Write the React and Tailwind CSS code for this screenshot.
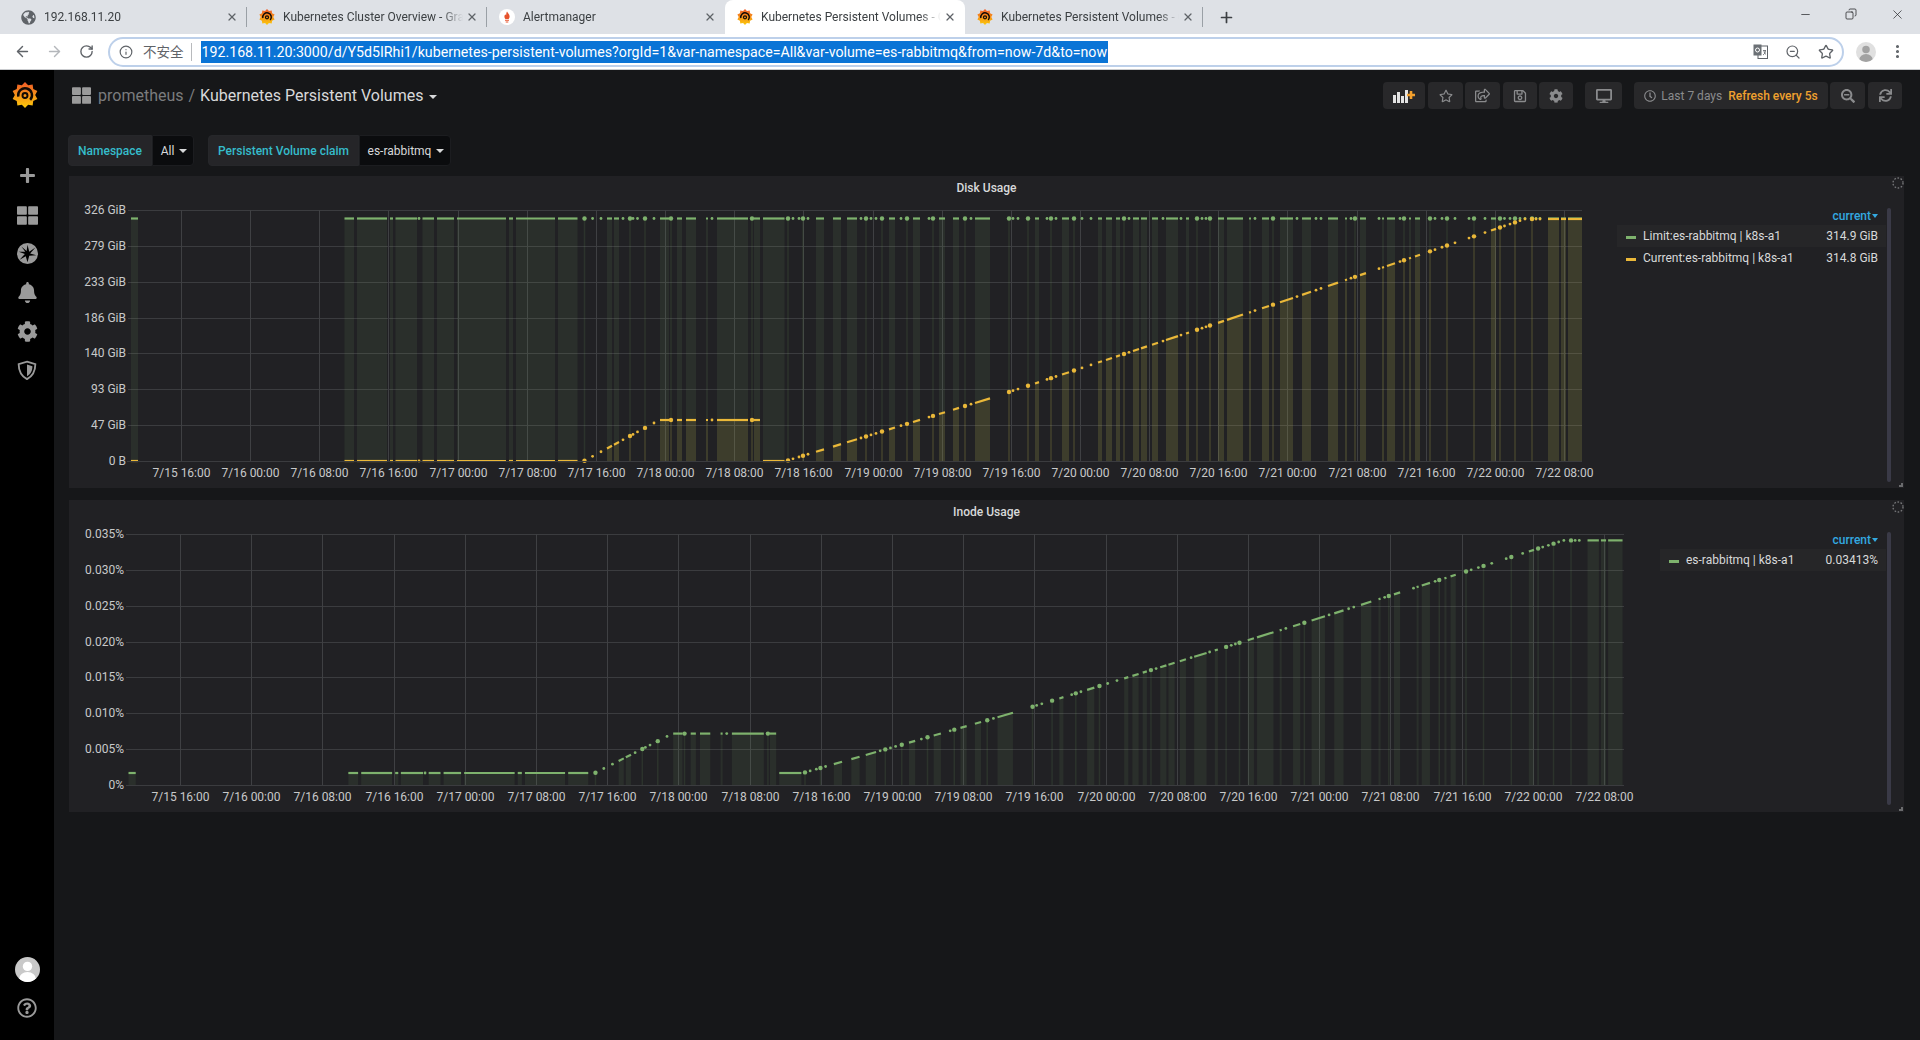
import { ArrowLeft, ArrowRight, RotateCw, Info, ZoomOut, Star, MoreVertical, X, Plus, Minus, Copy } from 'lucide-react';
import {
  FaGlobeAmericas, FaPlus, FaThLarge, FaBell, FaCog, FaRegQuestionCircle, FaRegStar,
  FaRegShareSquare, FaRegSave, FaDesktop, FaRegClock, FaSearchMinus, FaSync,
} from 'react-icons/fa';

const URL_TEXT = '192.168.11.20:3000/d/Y5d5IRhi1/kubernetes-persistent-volumes?orgId=1&var-namespace=All&var-volume=es-rabbitmq&from=now-7d&to=now';

const TICKS = [
  '7/15 16:00', '7/16 00:00', '7/16 08:00', '7/16 16:00', '7/17 00:00', '7/17 08:00', '7/17 16:00',
  '7/18 00:00', '7/18 08:00', '7/18 16:00', '7/19 00:00', '7/19 08:00', '7/19 16:00', '7/20 00:00',
  '7/20 08:00', '7/20 16:00', '7/21 00:00', '7/21 08:00', '7/21 16:00', '7/22 00:00', '7/22 08:00',
];

// scrape gaps read off the first panel: [from, to] is a run of samples, a bare number a lone sample
const RUNS = [
  [131, 138], [344.5, 354], [357, 387], [390, 393], [395.5, 417], 419, [422.5, 434], [437, 454], [457, 506],
  [509, 513], [516, 555], [558, 577.5], 584.5, 592.6, 601, [607, 612], [614, 619], 623, 630, 633, 637.5, 645, 654,
  [660, 669], 671, [677, 682], [686, 696], [706, 708], 712, [717, 748], 752, [754, 760], [763, 784.5], 788, 793, 799,
  803, 808, [816, 824], [833, 841], [847, 857], 861, 866, 871, 876, 882, [889, 895], 901, 907, [913, 920], 929, 933,
  [939, 945], [953, 959], 965, 971, [975, 990], 1009, 1013, 1018, 1028, [1035, 1039], 1047, 1051, 1056, [1062, 1069],
  1074, 1082, 1091, [1098, 1102], [1106, 1112], [1116, 1120], 1124, 1129, [1133, 1139], [1141, 1147], [1152, 1158],
  1163, [1166, 1178], 1181, [1186, 1189], 1197, 1202, 1206, 1210, [1218, 1224], [1227, 1243], [1249, 1251], 1255,
  [1262, 1269], 1273, [1280, 1293], 1297, [1302, 1311], 1316, 1321, [1328, 1338], [1345, 1347], 1351, 1355, [1360, 1366],
  1379, [1382, 1384], [1387, 1395], 1400, 1404, [1409, 1411], [1415, 1420], 1430, 1435, 1442, 1447, 1455, 1469, 1474,
  1485, [1491, 1496], 1500, 1504.5, 1510, 1515, 1520, 1525, 1532, 1536, 1540, [1548, 1559], [1561, 1566], [1568, 1582],
];

const CURVE = [
  [131, 461], [584, 461], [654, 423], [660, 420], [760, 420], [761, 461], [786, 461],
  [988, 399], [1287, 300], [1525, 219], [1582, 219],
];

function curveY(x) {
  for (let i = 1; i < CURVE.length; i++) {
    const [x0, y0] = CURVE[i - 1];
    const [x1, y1] = CURVE[i];
    if (x <= x1) return y0 + ((x - x0) / (x1 - x0)) * (y1 - y0);
  }
  return 219;
}

function Chart({ left, width, top, plotTop, plotBottom, plotLeft, plotRight, gridX, stepX, yTicks, labelRight, series, toX }) {
  const rowGap = (plotBottom - plotTop) / (yTicks.length - 1);
  return (
    <svg width={width} height={288} viewBox={`${left} ${top} ${width} 288`} className="shrink-0 text-[12px]">
      {yTicks.map((label, i) => {
        const y = Math.round(plotTop + i * rowGap) + 0.5;
        return (
          <g key={label}>
            <line x1={labelRight + 2} x2={plotRight} y1={y} y2={y} stroke="#3b3c3f" />
            <text x={labelRight} y={y + 3} textAnchor="end" className="fill-[#c8c9ca]">{label}</text>
          </g>
        );
      })}
      {TICKS.map((label, i) => {
        const x = Math.round(gridX + i * stepX) + 0.5;
        return (
          <g key={label}>
            <line x1={x} x2={x} y1={plotTop} y2={plotBottom} stroke="#3f4043" />
            <text x={x} y={plotBottom + 16} textAnchor="middle" className="fill-[#c8c9ca]">{label}</text>
          </g>
        );
      })}
      {series.map((s) => (
        <g key={s.color}>
          {RUNS.map((run, i) => {
            const lone = typeof run === 'number';
            const a = toX(lone ? run : run[0]);
            const b = toX(lone ? run : run[1]);
            const ya = s.y(lone ? run : run[0]);
            const yb = s.y(lone ? run : run[1]);
            if (lone) {
              return (
                <g key={i}>
                  {i % 3 === 0 && <rect x={a - 0.75} y={ya} width={1.5} height={plotBottom - ya} fill={s.color} fillOpacity={0.12} />}
                  <circle cx={a} cy={ya} r={i % 3 === 0 ? 2.2 : 1.4} fill={s.color} />
                </g>
              );
            }
            return (
              <g key={i}>
                <path d={`M${a} ${plotBottom}L${a} ${ya}L${b} ${yb}L${b} ${plotBottom}Z`} fill={s.color} fillOpacity={0.1} />
                <line x1={a} x2={b} y1={ya} y2={yb} stroke={s.color} strokeWidth={2.2} />
              </g>
            );
          })}
        </g>
      ))}
      <line x1={plotLeft} x2={plotRight} y1={plotBottom + 0.5} y2={plotBottom + 0.5} stroke="#3b3c3f" />
    </svg>
  );
}

function Spinner() {
  return (
    <svg width="12" height="12" viewBox="0 0 12 12" className="absolute top-[1px] right-[0px]">
      <circle cx="6" cy="6" r="5" fill="none" stroke="#77787a" strokeWidth="1.3" strokeDasharray="1.6 1.6" />
    </svg>
  );
}

function Panel({ title, chart, rows, legendWidth, barHeight }) {
  return (
    <div className="relative h-[312px] bg-[#212124]">
      <div className="h-[24px] pt-[4px] text-center text-[12px] leading-4 font-medium text-[#d8d9da]">{title}</div>
      <Spinner />
      <div className="flex">
        {chart}
        <div className={legendWidth}>
          <div className="flex h-[25px] items-center justify-end gap-px pt-[7px] pr-[8px] text-[12px] font-medium text-[#33a9e0]">
            current
            <span className="border-x-[3px] border-t-[4px] border-x-transparent border-t-[#33a9e0]" />
          </div>
          {rows.map((row, i) => (
            <div key={row.name} className={`flex h-[22px] items-center pr-[8px] pl-[9px] text-[12px] text-[#d8d9da] ${i === 0 ? 'bg-[#262628]' : ''}`}>
              <span className="mt-[2px] mr-[7px] h-[3px] w-[10px]" style={{ backgroundColor: row.color }} />
              <span className="flex-1">{row.name}</span>
              <span>{row.value}</span>
            </div>
          ))}
        </div>
        <div className={`mt-[8px] ml-px w-[4px] rounded-sm bg-[#3a3a47] ${barHeight}`} />
      </div>
      <div className="absolute right-[1px] bottom-[1px] h-[4px] w-[4px] border-r-2 border-b-2 border-[#6a6b6d]" />
    </div>
  );
}

function GrafanaLogo({ id, size }) {
  const spikes = [];
  for (let i = 0; i < 20; i++) {
    const r = i % 2 === 0 ? 12 : 9.4;
    const a = (i / 20) * Math.PI * 2 - Math.PI / 2;
    spikes.push(`${(12 + r * Math.cos(a)).toFixed(2)},${(12 + r * Math.sin(a)).toFixed(2)}`);
  }
  return (
    <svg width={size} height={size} viewBox="0 0 24 24" className="shrink-0">
      <defs>
        <linearGradient id={id} x1="0" y1="0" x2="0" y2="1">
          <stop offset="0" stopColor="#f05a28" />
          <stop offset="1" stopColor="#fbca0a" />
        </linearGradient>
      </defs>
      <polygon points={spikes.join(' ')} fill={`url(#${id})`} />
      <path d="M5.800 13.500A6.400 6.400 0 1 1 16.800 16.500" fill="none" stroke="#120a05" strokeWidth="2.200" />
      <circle cx="12" cy="12.500" r="2.300" fill="none" stroke="#120a05" strokeWidth="1.800" />
    </svg>
  );
}

function FlameIcon() {
  return (
    <svg width="16" height="16" viewBox="0 0 16 16" className="shrink-0">
      <circle cx="8" cy="8" r="8" fill="#fff" />
      <path d="M8 2.500c.6 1.600 2.600 2.600 2.600 5 0 1.200-.5 2-1 2.500H6.400c-.5-.5-1-1.300-1-2.500 0-1 .6-1.600 1-2.200.2.600.5.900.8 1C7.100 4.600 7.500 3.500 8 2.500zM6 10.800h4v1H6zM6.700 12.500h2.600v1H6.700z" fill="#e6522c" />
    </svg>
  );
}

function Tab({ icon, title, active, sep, width }) {
  return (
    <div className={`flex h-[34px] shrink-0 items-center pl-[12px] ${width} ${active ? 'rounded-t-lg bg-white' : ''}`}>
      {icon}
      <div className="ml-[8px] flex-1 overflow-hidden text-[12px] whitespace-nowrap text-[#3c4043] [mask-image:linear-gradient(to_right,black_88%,transparent)]">{title}</div>
      <X size={12} strokeWidth={2.5} className="ml-[3px] shrink-0 text-[#5f6368]" />
      <span className={`ml-[8px] h-[20px] w-px shrink-0 ${sep ? 'bg-[#9aa0a6]' : ''}`} />
    </div>
  );
}

function TabStrip() {
  return (
    <div className="flex h-[34px] items-start bg-[#dee1e6] pl-[8px]">
      <Tab width="w-[239px]" sep title="192.168.11.20" icon={<FaGlobeAmericas size={15} className="ml-[1px] shrink-0 text-[#5f6368]" />} />
      <Tab width="w-[240px]" sep title="Kubernetes Cluster Overview - Grafana" icon={<GrafanaLogo id="fav-a" size={16} />} />
      <Tab width="w-[238px]" title="Alertmanager" icon={<FlameIcon />} />
      <Tab width="w-[240px]" active title="Kubernetes Persistent Volumes - Grafana" icon={<GrafanaLogo id="fav-b" size={16} />} />
      <Tab width="w-[238px]" sep title="Kubernetes Persistent Volumes - Grafana" icon={<GrafanaLogo id="fav-c" size={16} />} />
      <div className="flex h-[34px] w-[46px] items-center justify-center">
        <Plus size={17} strokeWidth={2.4} className="text-[#3c4043]" />
      </div>
      <div className="ml-auto flex">
        <div className="flex h-[28px] w-[46px] items-center justify-center"><Minus size={13} strokeWidth={1.3} className="text-[#202124]" /></div>
        <div className="flex h-[28px] w-[46px] items-center justify-center"><Copy size={12} strokeWidth={1.5} className="-scale-x-100 text-[#202124]" /></div>
        <div className="flex h-[28px] w-[46px] items-center justify-center"><X size={15} strokeWidth={1.1} className="text-[#202124]" /></div>
      </div>
    </div>
  );
}

function TranslateIcon() {
  return (
    <svg width="15" height="15" viewBox="0 0 15 15" className="shrink-0">
      <rect x="5" y="2" width="9.500" height="12.500" fill="#fff" stroke="#5f6368" strokeWidth="1" />
      <rect x="0.500" y="0.500" width="8" height="11" fill="#6b7075" />
      <circle cx="4.500" cy="6" r="2" fill="none" stroke="#fff" strokeWidth="1" />
      <path d="M10 6.500h3M11 6.500c0 2 1 3.500 2 4M12.500 6.500c0 2-1 3.500-2.500 4.500" fill="none" stroke="#5f6368" strokeWidth="0.800" />
    </svg>
  );
}

function Avatar({ size, back, front }) {
  return (
    <svg width={size} height={size} viewBox="0 0 24 24" className="shrink-0">
      <defs>
        <clipPath id={`clip-${size}`}><circle cx="12" cy="12" r="12" /></clipPath>
      </defs>
      <circle cx="12" cy="12" r="12" fill={back} />
      <g clipPath={`url(#clip-${size})`} fill={front}>
        <circle cx="12" cy="9" r="4.500" />
        <ellipse cx="12" cy="21" rx="8" ry="6.500" />
      </g>
    </svg>
  );
}

function Toolbar() {
  return (
    <div className="flex h-[36px] items-center border-b border-[#c9cbce] bg-white pl-[6px]">
      <div className="flex w-[32px] justify-center"><ArrowLeft size={17} strokeWidth={2} className="text-[#5f6368]" /></div>
      <div className="flex w-[32px] justify-center"><ArrowRight size={17} strokeWidth={2} className="text-[#b4b7bb]" /></div>
      <div className="flex w-[32px] justify-center"><RotateCw size={15} strokeWidth={2.2} className="text-[#5f6368]" /></div>
      <div className="ml-[6px] flex h-[30px] w-[1736px] items-center rounded-full border-2 border-[#bdd0ea] pl-[9px]">
        <Info size={14} strokeWidth={2} className="shrink-0 text-[#5f6368]" />
        <span className="ml-[10px] text-[13.500px] text-[#5f6368] font-[family-name:'Noto_Sans_CJK_SC',sans-serif]">不安全</span>
        <span className="ml-[7px] h-[18px] w-px bg-[#b8babd]" />
        <span className="ml-[9px] bg-[#0a74d6] px-px text-[14.200px] leading-[22px] text-white">{URL_TEXT}</span>
        <div className="ml-auto flex items-center gap-[17px] pr-[8px]">
          <TranslateIcon />
          <ZoomOut size={16} strokeWidth={1.8} className="text-[#5f6368]" />
          <Star size={16} strokeWidth={2} className="text-[#5f6368]" />
        </div>
      </div>
      <div className="ml-[12px]"><Avatar size={20} back="#e0e0e0" front="#a2a2a2" /></div>
      <MoreVertical size={17} strokeWidth={2.4} className="ml-[13px] text-[#5f6368]" />
    </div>
  );
}

function Sidebar() {
  return (
    <div className="flex w-[54px] shrink-0 flex-col items-center bg-black text-[#9a9a9a]">
      <div className="mt-[12px] -ml-[4px] h-[26px]"><GrafanaLogo id="logo" size={26} /></div>
      <div className="mt-[57px] flex h-[20px] items-center"><FaPlus size={17} /></div>
      <div className="mt-[20px]"><FaThLarge size={21} /></div>
      <svg width="21" height="21" viewBox="0 0 24 24" className="mt-[17px]">
        <circle cx="12" cy="12" r="12" fill="#9a9a9a" />
        <polygon points="12,2 14,10 21,5 15,12 22,14 14,14.500 12,22 10,15 3,19 9,12.500 2,10 9.500,10 5,4 11,9" fill="#000" />
      </svg>
      <div className="mt-[18px]"><FaBell size={21} /></div>
      <div className="mt-[18px]"><FaCog size={21} /></div>
      <svg width="20" height="20" viewBox="0 0 24 24" className="mt-[18px]">
        <path d="M12 2L22 5C22 13 19 19 12 23C5 19 2 13 2 5Z" fill="none" stroke="#9a9a9a" strokeWidth="2.200" />
        <path d="M12 5.500L18.500 7.500C18.500 12 17 16.500 12 19.500Z" fill="#9a9a9a" />
      </svg>
      <div className="mt-auto"><Avatar size={25} back="#c9c9c9" front="#ffffff" /></div>
      <div className="mt-[16px] mb-[22px]"><FaRegQuestionCircle size={20} /></div>
    </div>
  );
}

function NavButton({ className, children }) {
  return <div className={`flex h-[27px] items-center justify-center rounded-sm bg-[#28282a] text-[#8a8b8d] ${className}`}>{children}</div>;
}

function Navbar() {
  return (
    <div className="flex items-center pt-[12px] pr-[18px] pl-[18px]">
      <FaThLarge size={19} className="text-[#9a9a9a]" />
      <span className="ml-[7px] text-[16px] text-[#7b7c7e]">prometheus</span>
      <span className="mx-[5px] text-[16px] text-[#7b7c7e]">/</span>
      <span className="text-[16px] text-[#d8d9da]">Kubernetes Persistent Volumes</span>
      <span className="mt-[3px] ml-[6px] border-x-[4px] border-t-[4px] border-x-transparent border-t-[#d8d9da]" />
      <div className="ml-auto flex items-center">
        <NavButton className="w-[42px]">
          <svg width="22" height="14" viewBox="0 0 22 14">
            <rect x="0" y="6" width="3" height="8" fill="#e3e3e3" />
            <rect x="4" y="3" width="3" height="11" fill="#e3e3e3" />
            <rect x="8" y="7" width="3" height="7" fill="#e3e3e3" />
            <rect x="12" y="1" width="3" height="13" fill="#e3e3e3" />
            <path d="M14 6h8M18 2v8" stroke="#f3a02d" strokeWidth="2.600" />
          </svg>
        </NavButton>
        <NavButton className="ml-[3px] w-[35px]"><FaRegStar size={14} /></NavButton>
        <NavButton className="ml-[2px] w-[35px]"><FaRegShareSquare size={15} /></NavButton>
        <NavButton className="ml-[3px] w-[34px]"><FaRegSave size={14} /></NavButton>
        <NavButton className="ml-[2px] w-[34px]"><FaCog size={14} /></NavButton>
        <NavButton className="ml-[12px] w-[37px]"><FaDesktop size={16} /></NavButton>
        <NavButton className="ml-[12px] w-[194px] gap-[5px] text-[12px]">
          <FaRegClock size={12} />
          <span>Last 7 days</span>
          <span className="ml-[1px] font-medium text-[#f0a12f]">Refresh every 5s</span>
        </NavButton>
        <NavButton className="ml-[2px] w-[35px]"><FaSearchMinus size={14} /></NavButton>
        <NavButton className="ml-[3px] w-[34px]"><FaSync size={13} /></NavButton>
      </div>
    </div>
  );
}

function Variable({ label, value, labelWidth, valueWidth }) {
  return (
    <div className="flex h-[31px] text-[12px]">
      <div className={`flex items-center justify-center rounded-l-sm border border-[#26272a] bg-[#252528] font-medium text-[#35bccb] ${labelWidth}`}>{label}</div>
      <div className={`flex items-center justify-center gap-[5px] rounded-r-sm border border-[#1c1d20] bg-[#0b0c0e] pl-[2px] text-[#d8d9da] ${valueWidth}`}>
        {value}
        <span className="border-x-[4px] border-t-[4px] border-x-transparent border-t-[#d8d9da]" />
      </div>
    </div>
  );
}

const diskY = (x) => curveY(x);
const limitY = () => 218.5;
const inodeY = (x) => 773 - ((461 - curveY(x)) / 242.4) * 233;
const inodeX = (x) => 180 + 71.2 * ((x - 181) / 69.15);

export default function App() {
  return (
    <div className="flex h-[1040px] w-[1920px] flex-col overflow-hidden bg-[#161719] font-[family-name:Roboto,sans-serif]">
      <TabStrip />
      <Toolbar />
      <div className="flex flex-1">
        <Sidebar />
        <div className="flex-1">
          <Navbar />
          <div className="mt-[26px] ml-[14px] flex gap-[14px]">
            <Variable label="Namespace" value="All" labelWidth="w-[84px]" valueWidth="w-[42px]" />
            <Variable label="Persistent Volume claim" value="es-rabbitmq" labelWidth="w-[151px]" valueWidth="w-[92px]" />
          </div>
          <div className="mt-[10px] mr-[16px] ml-[15px] flex flex-col gap-[12px]">
            <Panel
              title="Disk Usage"
              legendWidth="w-[269px]"
              barHeight="h-[274px]"
              rows={[
                { name: 'Limit:es-rabbitmq | k8s-a1', value: '314.9 GiB', color: '#7eb26d' },
                { name: 'Current:es-rabbitmq | k8s-a1', value: '314.8 GiB', color: '#eab839' },
              ]}
              chart={
                <Chart
                  left={69} width={1548} top={200}
                  plotTop={210} plotBottom={461} plotLeft={127} plotRight={1582}
                  gridX={181} stepX={69.15} labelRight={126}
                  yTicks={['326 GiB', '279 GiB', '233 GiB', '186 GiB', '140 GiB', '93 GiB', '47 GiB', '0 B']}
                  series={[{ color: '#7eb26d', y: limitY }, { color: '#eab839', y: diskY }]}
                  toX={(x) => x}
                />
              }
            />
            <Panel
              title="Inode Usage"
              legendWidth="w-[226px]"
              barHeight="h-[273px]"
              rows={[{ name: 'es-rabbitmq | k8s-a1', value: '0.03413%', color: '#7eb26d' }]}
              chart={
                <Chart
                  left={69} width={1591} top={524}
                  plotTop={534} plotBottom={785} plotLeft={127} plotRight={1624}
                  gridX={180} stepX={71.2} labelRight={124}
                  yTicks={['0.035%', '0.030%', '0.025%', '0.020%', '0.015%', '0.010%', '0.005%', '0%']}
                  series={[{ color: '#7eb26d', y: inodeY }]}
                  toX={inodeX}
                />
              }
            />
          </div>
        </div>
      </div>
    </div>
  );
}
